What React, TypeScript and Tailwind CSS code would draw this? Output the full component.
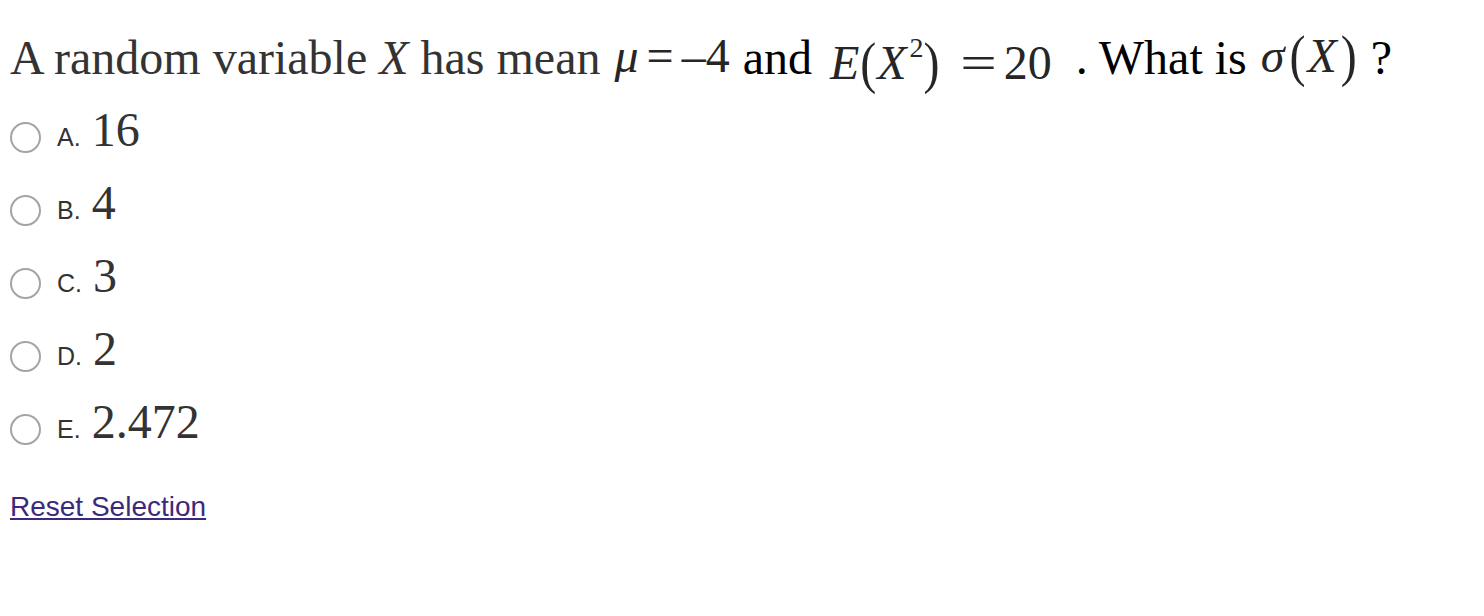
import React from "react";

const serif = "font-['Liberation_Serif','Times_New_Roman',serif]";
const sans = "font-['Liberation_Sans',Arial,sans-serif]";

const options = [
  { key: "A.", value: "16" },
  { key: "B.", value: "4" },
  { key: "C.", value: "3" },
  { key: "D.", value: "2" },
  { key: "E.", value: "2.472" },
];

function Radio() {
  return (
    <span className="inline-block w-[31px] h-[31px] rounded-full border-2 border-[#a4a4a4] bg-white shrink-0" />
  );
}

// a tall parenthesis as rendered by the math images
function Paren({ c, className = "" }: { c: string; className?: string }) {
  return <span className={`inline-block scale-y-[1.18] ${className}`}>{c}</span>;
}

export default function App() {
  return (
    <div className="min-h-screen bg-white pl-[10px] pt-[30px]">
      <p className={`${serif} text-[48px] leading-[56px] text-[#333] whitespace-nowrap`}>
        A random variable <i>X</i> has mean{" "}
        <span className="leading-none text-[#262626] align-[2px]">
          <i className="ml-[2px]">μ</i>
          <span className="inline-block ml-[8px]">=</span>
          <span className="inline-block ml-[8px]">–4</span>
        </span>{" "}
        <span className="text-black ml-[1px]">and</span>{" "}
        <span className="leading-none text-[#262626] align-[-5px]">
          <i className="ml-[6px]">E</i>
          <Paren c="(" className="ml-[1px]" />
          <i className="ml-[1px]">X</i>
          <span className="text-[28px] align-[22px] ml-[3px]">2</span>
          <Paren c=")" className="ml-[0px]" />
          <span className="inline-block scale-x-[1.35] ml-[25px]">=</span>
          <span className="ml-[12px]">20</span>
        </span>{" "}
        <span className="text-black ml-[12px]">. What is</span>{" "}
        <span className="leading-none text-[#262626] align-[2px]">
          <i className="ml-[2px]">σ</i>
          <Paren c="(" className="ml-[5px]" />
          <i className="ml-[2px]">X</i>
          <Paren c=")" className="ml-[4px]" />
        </span>{" "}
        <span className="text-black ml-[2px]">?</span>
      </p>

      <div className="mt-[22px] flex flex-col gap-[16px]">
        {options.map((o) => (
          <label key={o.key} className="flex items-center h-[57px] cursor-pointer">
            <Radio />
            <span className="flex items-baseline -mt-[16px] ml-[16px]">
              <span className={`${sans} text-[25px] text-[#333] leading-none`}>{o.key}</span>
              <span className={`${serif} text-[48px] text-[#333] ml-[11px] leading-none`}>
                {o.value}
              </span>
            </span>
          </label>
        ))}
      </div>

      <a
        href="#"
        className={`${sans} inline-block mt-[28px] text-[28px] text-[#3b2a7c] underline`}
      >
        Reset Selection
      </a>
    </div>
  );
}
